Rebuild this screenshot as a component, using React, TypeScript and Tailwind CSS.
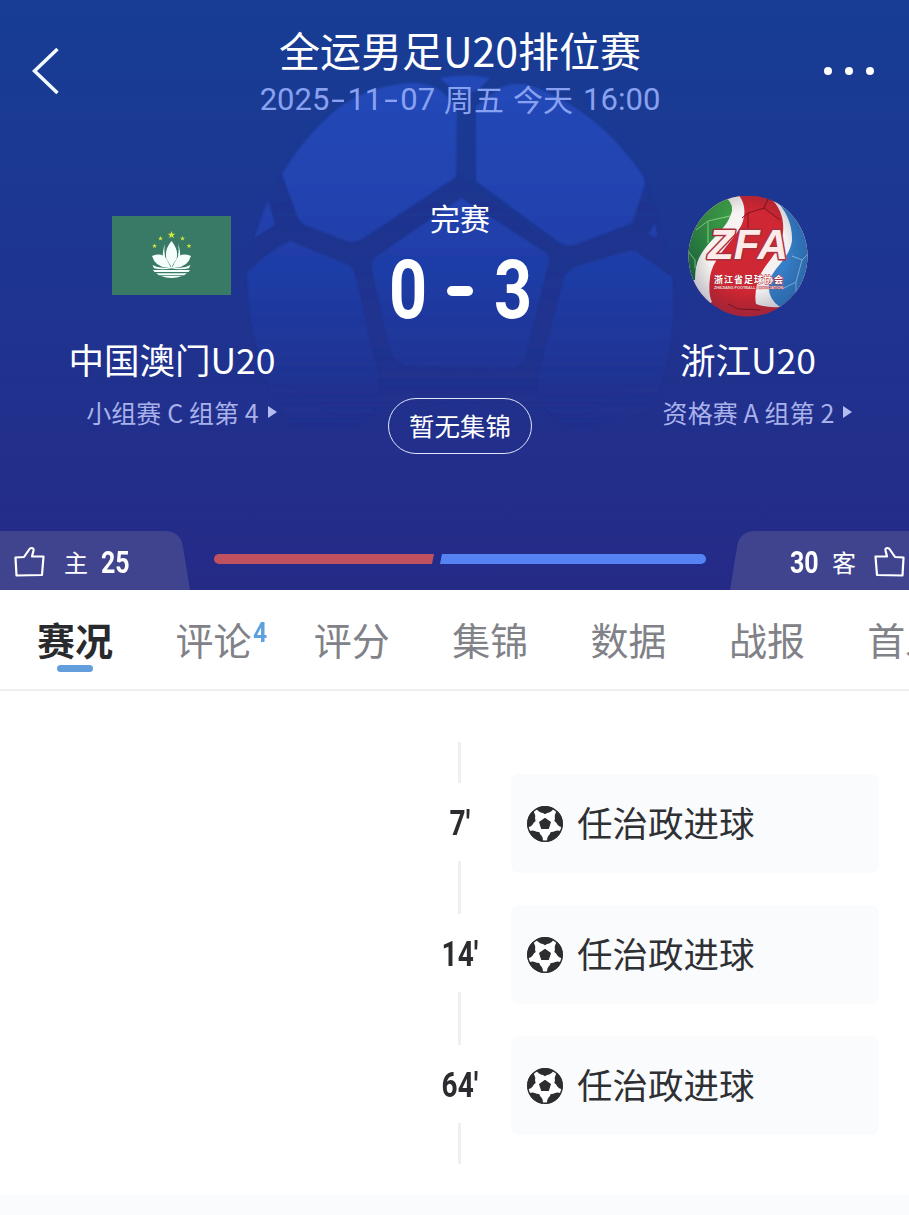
import type { ReactNode } from 'react'

const tabs = ['赛况', '评论', '评分', '集锦', '数据', '战报', '首发']

const events = [
  { minute: '7′', text: '任治政进球' },
  { minute: '14′', text: '任治政进球' },
  { minute: '64′', text: '任治政进球' },
]

const patchAngles = [0, 72, 144, 216, 288]

function BallBackdrop() {
  return (
    <svg className="absolute left-0 top-0" width="909" height="590" viewBox="0 0 909 590" aria-hidden="true">
      <defs>
        <linearGradient id="panel" gradientUnits="userSpaceOnUse" x1="0" y1="76" x2="0" y2="430">
          <stop offset="0" stopColor="#2449b8" />
          <stop offset="0.35" stopColor="#2143b0" />
          <stop offset="0.6" stopColor="#1f3ba3" />
          <stop offset="0.8" stopColor="#1f3699" stopOpacity="0.8" />
          <stop offset="1" stopColor="#222f8c" stopOpacity="0" />
        </linearGradient>
        <linearGradient id="seam" gradientUnits="userSpaceOnUse" x1="0" y1="170" x2="0" y2="420">
          <stop offset="0" stopColor="#1b358f" />
          <stop offset="0.7" stopColor="#1e338f" stopOpacity="0.8" />
          <stop offset="1" stopColor="#202e8a" stopOpacity="0" />
        </linearGradient>
        <filter id="soft"><feGaussianBlur stdDeviation="1.3" /></filter>
      </defs>
      <path
        d="M283 174 L303 224 L358 241 L460 176 L560 246 L632 226 L645 180 L660 225 L674 275 L660 375 L575 420 L460 400 L345 420 L262 380 L247 272 L255 237 Z"
        fill="url(#seam)"
        filter="url(#soft)"
      />
      <g fill="url(#panel)" filter="url(#soft)">
        <path d="M440 78 Q465 73 490 78 L478 90 Q466 94 454 90 Z" />
        <path d="M282 174 Q306 134 340 107 Q372 84 415 83 Q430 84 440 90 L457 106 L456 177 L362 239 Q355 243 346 241 L305 225 Q300 222 297 215 Z" />
        <path d="M476 106 L500 88 Q515 80 535 87 Q600 112 643 176 Q646 181 644 187 L632 223 L575 245 Q566 247 560 243 L476 181 Z" />
        <path d="M268 200 L275 225 L254 238 Z" />
        <path d="M655 222 L657 238 L649 234 Z" />
        <path d="M461 198 L545 252 Q550 257 548 264 L526 355 Q522 368 508 368 L412 366 Q395 366 390 350 L372 268 Q371 260 377 256 Z" />
        <path d="M247 273 Q270 250 290 241 L346 264 Q353 267 355 275 L378 375 Q384 415 350 430 L295 430 Q250 370 247 273 Z" />
        <path d="M575 267 L628 251 Q636 250 642 256 L672 277 Q678 350 650 410 L575 430 Q530 410 540 370 L565 275 Z" />
      </g>
    </svg>
  )
}

function MacauFlag() {
  return (
    <svg className="-ml-[2px]" width="119" height="79" viewBox="0 0 119 79" aria-hidden="true">
      <rect width="119" height="79" fill="#387a65" />
      {[
        [59.5, 19, 4],
        [48.5, 22.5, 2.6],
        [70.5, 22.5, 2.6],
        [42.5, 30, 2.6],
        [77, 30, 2.6],
      ].map(([x, y, s]) => (
        <path
          key={x}
          transform={`translate(${x} ${y}) scale(${s})`}
          d="M0 -1 L.24 -.32 L.95 -.31 L.38 .12 L.59 .81 L0 .4 L-.59 .81 L-.38 .12 L-.95 -.31 L-.24 -.32 Z"
          fill="#d6ea3e"
        />
      ))}
      <g fill="#f4fffb">
        <path d="M59.5 25 Q67 34 64.5 43 L59.5 51 L54.5 43 Q52 34 59.5 25 Z" />
        <path d="M53 27.5 Q51.5 33 53.5 43 L58 50 Q50 46 51 36 Q51.500 31 53 27.5 Z" />
        <path d="M66 27.5 Q67.5 33 65.5 43 L61 50 Q69 46 68 36 Q67.500 31 66 27.5 Z" />
        <path d="M40 40 Q50 36 54.500 43 L58.500 51 Q44 53 40 40 Z" />
        <path d="M79 40 Q69 36 64.500 43 L60.500 51 Q75 53 79 40 Z" />
        <path d="M40.5 49 Q48 53.500 59.5 50.500 Q71 53.500 78.500 49 L77 52.3 Q68 54 59.5 52.300 Q51 54 42 52.300 Z" />
        <path d="M41 54 H78 L76.500 56 H42.500 Z" />
        <path d="M44 57.200 H75 L72 59.200 H47 Z" />
        <path d="M49 60 H70 Q59.500 64 49 60 Z" />
      </g>
    </svg>
  )
}

function ZfaLogo() {
  return (
    <svg className="mt-[3px]" width="120" height="122" viewBox="0 0 120 122" aria-hidden="true">
      <defs>
        <clipPath id="disc"><ellipse cx="60" cy="60" rx="59.500" ry="60.500" /></clipPath>
        <radialGradient id="shade" cx="0.5" cy="0.45" r="0.55">
          <stop offset="0.6" stopColor="#000" stopOpacity="0" />
          <stop offset="1" stopColor="#10205c" stopOpacity="0.25" />
        </radialGradient>
        <linearGradient id="green" x1="0" y1="0" x2="0" y2="1">
          <stop offset="0" stopColor="#45ab49" />
          <stop offset="1" stopColor="#1b6d3d" />
        </linearGradient>
      </defs>
      <g clipPath="url(#disc)">
        <rect width="120" height="122" fill="#cf2733" />
        <path d="M-4 -4 H48 Q60 8 55 25 C50 42 24 60 22 82 Q20 98 24 106 L-4 122 Z" fill="#f7f3f2" />
        <path d="M-4 -4 H30 Q48 6 43 18 C38 34 20 44 11 62 Q7 70 7 84 L-4 84 Z" fill="url(#green)" />
        <path d="M80 0 Q97 14 95 36 C92 58 74 70 70 84 Q66 98 68 108 Q78 112 92 111 L124 80 V-4 H80 Z" fill="#f3f1f2" />
        <path d="M84 0 Q105 20 104 45 C101 64 84 72 81 87 Q79 102 92 111 L124 96 V-4 Z" fill="#357fc8" />
        <g fill="none" stroke="#7f1620" strokeWidth="1">
          <path d="M54 22 L60 17 L76 12 L92 24 M76 12 L80 3 M60 17 L60 32 M40 108 L50 113 L72 114" />
        </g>
        <g fill="none" stroke="#8fd08b" strokeWidth="1">
          <path d="M42 20 L20 25 L8 34 M20 25 V47 M0 55 L7 64 V72" />
        </g>
        <g fill="none" stroke="#8cc1ee" strokeWidth="1">
          <path d="M104 60 L114 64 L120 58 M114 64 L108 86 L94 93 M108 86 V98" />
        </g>
        <rect width="120" height="122" fill="url(#shade)" />
      </g>
      <text
        x="20"
        y="63"
        textLength="80"
        lengthAdjust="spacingAndGlyphs"
        className="font-['Liberation_Sans'] text-[42px] font-bold italic"
        fill="#fdebea"
        stroke="#a82f3c"
        strokeWidth="3"
        strokeLinejoin="round"
        paintOrder="stroke"
      >
        ZFA
      </text>
      <text
        x="26"
        y="86.500"
        textLength="69"
        className="font-['Noto_Sans_CJK_SC'] text-[9px] font-bold"
        fill="#fff"
        stroke="#b3303b"
        strokeWidth="1"
        paintOrder="stroke"
      >
        浙江省足球协会
      </text>
      <text
        x="26"
        y="93"
        textLength="69"
        lengthAdjust="spacingAndGlyphs"
        className="font-['Liberation_Sans'] text-[4px] font-bold"
        fill="#f6d9d9"
        stroke="#b3303b"
        strokeWidth="0.600"
        paintOrder="stroke"
      >
        ZHEJIANG FOOTBALL ASSOCIATION
      </text>
    </svg>
  )
}

function ThumbUp({ flip = false }: { flip?: boolean }) {
  return (
    <svg
      width="32"
      height="32"
      viewBox="0 0 32 32"
      fill="none"
      stroke="#fff"
      strokeWidth="2.200"
      strokeLinejoin="round"
      className={flip ? '-scale-x-100' : ''}
      aria-hidden="true"
    >
      <path d="M2.500 11.500 L11 11 L16.500 3 Q17 2 18.500 2 Q21 2 20.500 4.500 L19 10.500 H30.500 L29 29 L3.500 29.500 Z" />
    </svg>
  )
}

function FootballIcon() {
  return (
    <svg width="36" height="36" viewBox="-18 -18 36 36" aria-hidden="true">
      <circle r="17.200" fill="#fff" stroke="#2c2d30" strokeWidth="1.400" />
      <path d="M0 -5.500 L5.300 -1.700 L3.300 4.500 H-3.300 L-5.300 -1.700 Z" fill="#2c2d30" stroke="#2c2d30" strokeWidth="1.200" strokeLinejoin="round" />
      {patchAngles.map((a) => (
        <path key={a} transform={`rotate(${a})`} d="M-8.800 -15.500 A17.800 17.800 0 0 1 8.800 -15.500 Q6.500 -12 4.200 -11.600 Q2 -11.400 0 -9.800 Q-2 -11.400 -4.200 -11.600 Q-6.500 -12 -8.800 -15.500 Z" fill="#2c2d30" />
      ))}
    </svg>
  )
}

function Arrow() {
  return (
    <svg className="ml-[9px]" width="9" height="12" viewBox="0 0 9 12" aria-hidden="true">
      <path d="M0 0 L9 6 L0 12 Z" fill="#b5bdf0" />
    </svg>
  )
}

function Team({ logo, name, rank }: { logo: ReactNode; name: string; rank: string }) {
  return (
    <div className="flex flex-col items-center">
      <div className="flex h-[122px] items-center">{logo}</div>
      <div className="mt-[25px] text-[35.500px] leading-[36px] text-white">{name}</div>
      <div className="mt-[22px] flex items-center pl-[19px] text-[25px] leading-[26px] tracking-[0.100px] text-[#a9b1ea]">
        <span className="whitespace-pre">{rank}</span>
        <Arrow />
      </div>
    </div>
  )
}

function Header() {
  return (
    <header className="relative flex h-[590px] flex-col overflow-hidden bg-linear-to-b from-[#173d94] via-[#1d3591] via-45% to-[#252a87]">
      <BallBackdrop />

      {/* Title bar */}
      <div className="relative flex h-[194px] items-start justify-between pl-8 pr-[35px]">
        <svg className="mt-[46px]" width="28" height="50" viewBox="0 0 28 50" fill="none" stroke="#f2fbff" strokeWidth="3.500" aria-hidden="true">
          <path d="M25.500 3 L2.500 25 L25.500 47" />
        </svg>
        <div className="ml-[36px] flex flex-col items-center pt-[28px]">
          <h1 className="text-[41px] leading-[42px] text-white">全运男足U20排位赛</h1>
          <div className="mt-[12px] flex gap-[9px] text-[30px] leading-[32px] text-[#88a1f0]">
            <span className="pt-[2px] font-['Roboto'] text-[31px]">
              2025<span className="inline-block w-[18px] scale-x-160 text-center">-</span>11
              <span className="inline-block w-[18px] scale-x-160 text-center">-</span>07
            </span>
            <span>周五</span>
            <span>今天</span>
            <span className="pl-[1px] pt-[2px] font-['Roboto'] text-[31px]">16:00</span>
          </div>
        </div>
        <div className="mt-[67px] flex gap-[13px]">
          <span className="size-2 rounded-full bg-white" />
          <span className="size-2 rounded-full bg-white" />
          <span className="size-2 rounded-full bg-white" />
        </div>
      </div>

      {/* Teams and score */}
      <div className="relative grid w-[920px] flex-1 grid-cols-[344px_232px_344px]">
        <Team logo={<MacauFlag />} name="中国澳门U20" rank="小组赛 C 组第 4" />
        <div className="flex flex-col items-center text-white">
          <div className="mt-[8px] text-[30px] leading-[30px]">完赛</div>
          <div className="mt-[19px] flex items-center gap-[17px] font-['Roboto'] text-[81px] font-bold leading-[80px]">
            <span className="w-[45px] scale-x-[0.82] text-center">0</span>
            <span className="h-[10px] w-[26px] rounded-full bg-white" />
            <span className="w-[45px] scale-x-[0.82] text-center">3</span>
          </div>
          <div className="mt-[67px] flex h-[56px] w-[144px] items-center justify-center rounded-full border border-[#dfe6fb] pb-[3px] text-[25.500px] leading-none">
            暂无集锦
          </div>
        </div>
        <Team logo={<ZfaLogo />} name="浙江U20" rank="资格赛 A 组第 2" />
      </div>

      {/* Support votes */}
      <div className="relative flex h-[59px] items-center justify-between text-white">
        <div className="relative flex h-full w-[190px] items-center pl-[13px]">
          <svg className="absolute left-0 top-0" width="190" height="59" viewBox="0 0 190 59" aria-hidden="true">
            <path d="M0 0 H164 Q181 0 183 16 L190 59 H0 Z" fill="#40448f" />
          </svg>
          <div className="relative flex items-center pt-[2px]">
            <ThumbUp />
            <span className="ml-[19px] text-[24px] leading-none">主</span>
            <span className="ml-[13px] origin-left scale-x-[0.78] font-['Roboto'] text-[32px] font-bold leading-none">25</span>
          </div>
        </div>
        <svg className="mb-[3px]" width="492" height="10" viewBox="0 0 492 10" aria-hidden="true">
          <path d="M5 0 H220 L218 10 H5 A5 5 0 0 1 5 0 Z" fill="#c05260" />
          <path d="M228 0 H487 A5 5 0 0 1 487 10 H226 Z" fill="#5583f4" />
        </svg>
        <div className="relative flex h-full w-[179px] items-center pl-[60px]">
          <svg className="absolute left-0 top-0" width="179" height="59" viewBox="0 0 179 59" aria-hidden="true">
            <path d="M179 0 H26 Q9 0 7 16 L0 59 H179 Z" fill="#40448f" />
          </svg>
          <div className="relative flex items-center pt-[2px]">
            <span className="w-[28px] origin-left scale-x-[0.78] font-['Roboto'] text-[32px] font-bold leading-none">30</span>
            <span className="ml-[14px] text-[24px] leading-none">客</span>
            <span className="ml-[18px]"><ThumbUp flip /></span>
          </div>
        </div>
      </div>
    </header>
  )
}

function TabBar() {
  return (
    <nav className="flex h-[101px] gap-[62.400px] overflow-hidden border-b-2 border-[#eeeff1] pl-[37px] pt-[31px] text-[38px] leading-[38px] text-[#808287]">
      {tabs.map((tab, i) => (
        <div key={tab} className={i === 0 ? 'w-[76px] shrink-0 font-bold text-[#292a2d]' : 'relative w-[76px] shrink-0'}>
          <div className="-mt-[1px]">{tab}</div>
          {i === 0 && <div className="mx-auto mt-[7px] h-[7px] w-[36px] rounded-full bg-[#619edb]" />}
          {tab === '评论' && (
            <span className="absolute -top-[2px] left-[78px] origin-left scale-x-[0.88] font-['Roboto'] text-[28px] font-bold leading-none text-[#5fa1dc]">
              4
            </span>
          )}
        </div>
      ))}
    </nav>
  )
}

function Timeline() {
  return (
    <main className="flex h-[504px] pl-[420px] pt-[51px]">
      <div className="flex w-[79px] flex-col items-center">
        <div className="h-[41px] w-[3px] bg-[#efeff1]" />
        {events.map((e, i) => (
          <div key={e.minute} className="flex flex-col items-center">
            <div className="flex h-[78px] scale-x-[0.8] items-center pt-[2px] font-['Roboto'] text-[35px] font-bold leading-none text-[#2b2c2f]">
              {e.minute}
            </div>
            <div className={i < events.length - 1 ? 'h-[53px] w-[3px] bg-[#efeff1]' : 'h-[41px] w-[3px] bg-[#efeff1]'} />
          </div>
        ))}
      </div>
      <div className="ml-[12px] flex flex-col gap-[32px] pt-[32px]">
        {events.map((e) => (
          <div key={e.minute} className="flex h-[99px] w-[368px] items-center gap-[14px] rounded-lg bg-[#fafbfd] pl-4">
            <FootballIcon />
            <span className="pb-[4px] text-[35.500px] leading-none text-[#2f3033]">{e.text}</span>
          </div>
        ))}
      </div>
    </main>
  )
}

export default function App() {
  return (
    <div className="flex h-[1215px] w-[909px] flex-col overflow-hidden bg-white font-['Noto_Sans_CJK_SC',sans-serif]">
      <Header />
      <TabBar />
      <Timeline />
      <footer className="flex-1 bg-[#fafbfd]" />
    </div>
  )
}
